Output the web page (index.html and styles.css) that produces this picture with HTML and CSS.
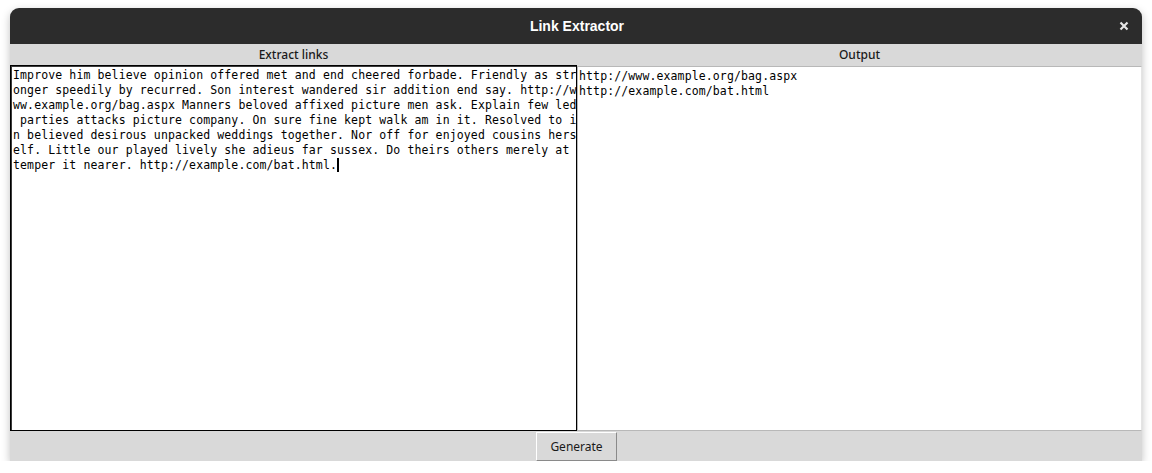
FILE: index.html
```html
<!DOCTYPE html>
<html>
<head>
<meta charset="utf-8">
<link rel="stylesheet" href="styles.css">
</head>
<body>
<div class="window">
  <div class="titlebar">
    <span class="title">Link Extractor</span>
    <svg class="close" width="10" height="10" viewBox="0 0 10 10"><path d="M1.5 1.5 L8.5 8.5 M8.5 1.5 L1.5 8.5" stroke="#e6e6e6" stroke-width="2.2" stroke-linecap="butt"/></svg>
  </div>
  <div class="content">
    <div class="col">
      <div class="label">Extract links</div>
      <div class="pane input">
        <div class="line">Improve him believe opinion offered met and end cheered forbade. Friendly as str</div>
        <div class="line">onger speedily by recurred. Son interest wandered sir addition end say. http://w</div>
        <div class="line">ww.example.org/bag.aspx Manners beloved affixed picture men ask. Explain few led</div>
        <div class="line"> parties attacks picture company. On sure fine kept walk am in it. Resolved to i</div>
        <div class="line">n believed desirous unpacked weddings together. Nor off for enjoyed cousins hers</div>
        <div class="line">elf. Little our played lively she adieus far sussex. Do theirs others merely at </div>
        <div class="line">temper it nearer. http://example.com/bat.html.<span class="caret"></span></div>
      </div>
    </div>
    <div class="col">
      <div class="label">Output</div>
      <div class="pane output">
        <div class="line">http://www.example.org/bag.aspx</div>
        <div class="line">http://example.com/bat.html</div>
      </div>
    </div>
  </div>
  <div class="footer">
    <button class="btn">Generate</button>
  </div>
</div>
</body>
</html>
```
FILE: styles.css
```css
html, body {
  margin: 0;
  padding: 0;
  background: #ffffff;
}
body {
  padding: 8px 10px 0 10px;
}
.window {
  width: 1132px;
  height: 453px;
  display: flex;
  flex-direction: column;
  background: #d9d9d9;
  border-radius: 9px 9px 0 0;
  box-shadow: 0 3px 8px rgba(0,0,0,0.25);
  overflow: hidden;
}
.titlebar {
  height: 36px;
  flex: none;
  background: #2c2c2c;
  display: flex;
  align-items: center;
  justify-content: center;
  position: relative;
}
.title {
  color: #ffffff;
  font-family: "Liberation Sans", Arial, sans-serif;
  font-weight: bold;
  font-size: 14px;
  margin-left: 2px;
}
.close {
  position: absolute;
  right: 13px;
  top: 13px;
}
.content {
  display: grid;
  grid-template-columns: 567px 565px;
  height: 387px;
  flex: none;
}
.col {
  display: flex;
  flex-direction: column;
  min-height: 0;
}
.label {
  height: 21px;
  flex: none;
  text-align: center;
  font-family: "Noto Sans", "Open Sans", sans-serif;
  font-size: 12px;
  line-height: 21px;
  color: #1a1a1a;
  font-weight: 500;
}
.pane {
  flex: 1;
  background: #ffffff;
  font-family: "DejaVu Sans Mono", monospace;
  font-size: 11.5px;
  letter-spacing: 0.12px;
  line-height: 15px;
  color: #000000;
  overflow: hidden;
}
.input {
  border: 1px solid #000000;
  box-shadow: inset 1px 1px 0 #3a3a3a;
  padding: 2px 0 0 2px;
}
.output {
  border: 1px solid #b8b8b8;
  border-right-color: #e4e4e4;
  padding: 2px 0 0 1px;
  margin-top: 1px;
}
.line {
  height: 15px;
  white-space: pre;
}
.caret {
  display: inline-block;
  width: 2px;
  height: 14px;
  background: #000;
  vertical-align: -3px;
}
.footer {
  flex: 1;
  display: flex;
  justify-content: center;
  align-items: flex-start;
  padding-top: 1px;
}
.btn {
  width: 81px;
  height: 29px;
  background: #d9d9d9;
  border: 1px solid;
  border-color: #ffffff #8a8a8a #8a8a8a #ffffff;
  font-family: "Noto Sans", "Open Sans", sans-serif;
  font-size: 12px;
  color: #1a1a1a;
  padding: 0;
  margin-left: 1px;
}
```
